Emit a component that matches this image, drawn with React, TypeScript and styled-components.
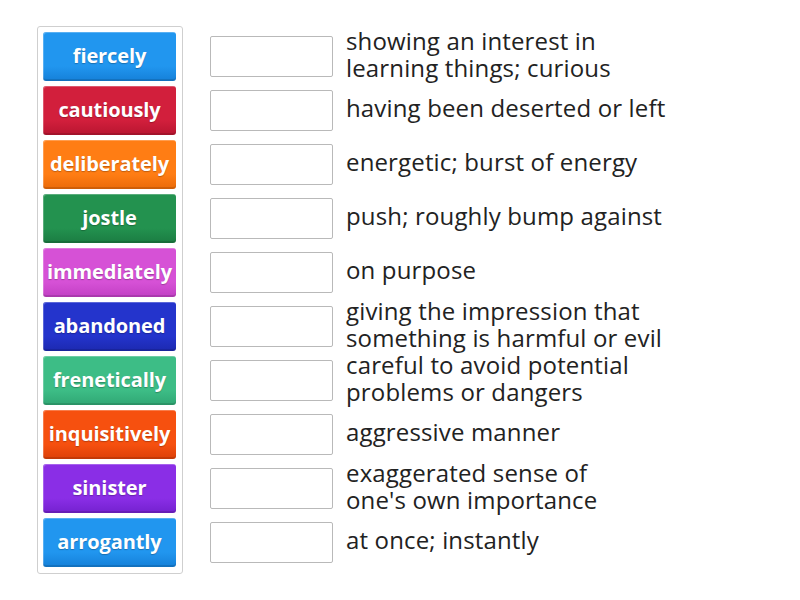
import React from "react";
import styled, { createGlobalStyle } from "styled-components";

const Global = createGlobalStyle`
  html, body { margin: 0; padding: 0; background: #fff; }
  body { font-family: "Open Sans", "Liberation Sans", sans-serif; }
`;

const Page = styled.div`
  display: flex;
  align-items: flex-start;
  gap: 27px;
  padding: 26px 0 0 37px;
`;

const Card = styled.div`
  display: flex;
  flex-direction: column;
  gap: 5px;
  padding: 5px 6px 6px 5px;
  border: 1px solid #cfcfcf;
  border-radius: 3px;
  background: #fff;
`;

const Tile = styled.div<{ $c: string; $d: string }>`
  width: 133px;
  height: 49px;
  box-sizing: border-box;
  padding-bottom: 2px;
  display: flex;
  align-items: center;
  justify-content: center;
  border-radius: 3px;
  background: linear-gradient(to bottom, ${(p) => p.$c} 0%, ${(p) => p.$c} 70%, ${(p) => p.$d} 100%);
  box-shadow: inset 1px 1px 0 rgba(255, 255, 255, 0.25), inset 0 -2px 0 rgba(0, 0, 0, 0.12);
  color: #fff;
  font-weight: 700;
  font-size: 20px;
  letter-spacing: -0.1px;
  text-shadow: 0 1px 1px rgba(0, 0, 0, 0.25);
  white-space: nowrap;
`;

const Rows = styled.div`
  display: flex;
  flex-direction: column;
  gap: 5px;
  padding-top: 6px;
`;

const Row = styled.div`
  height: 49px;
  display: flex;
  align-items: center;
  gap: 13px;
`;

const Box = styled.div`
  width: 123px;
  height: 41px;
  box-sizing: border-box;
  border: 1px solid #b9b9b9;
  border-radius: 2px;
  background: #fff;
  flex-shrink: 0;
`;

const Def = styled.div`
  font-size: 24px;
  line-height: 27px;
  letter-spacing: 0.15px;
  padding-bottom: 6px;
  color: #222;
  white-space: pre-line;
`;

const tiles: [string, string, string][] = [
  ["fiercely", "#2196ef", "#1580d8"],
  ["cautiously", "#d21f3c", "#b81530"],
  ["deliberately", "#ff7d14", "#ea6a08"],
  ["jostle", "#23924f", "#1b7c42"],
  ["immediately", "#d651d6", "#c13fc4"],
  ["abandoned", "#2434cc", "#1c29b0"],
  ["frenetically", "#3dbd86", "#30a774"],
  ["inquisitively", "#f6500f", "#dc4008"],
  ["sinister", "#8a2ee6", "#7421cf"],
  ["arrogantly", "#2196ef", "#1580d8"],
];

const defs = [
  "showing an interest in\nlearning things; curious",
  "having been deserted or left",
  "energetic; burst of energy",
  "push; roughly bump against",
  "on purpose",
  "giving the impression that\nsomething is harmful or evil",
  "careful to avoid potential\nproblems or dangers",
  "aggressive manner",
  "exaggerated sense of\none's own importance",
  "at once; instantly",
];

export default function App() {
  return (
    <>
      <Global />
      <Page>
        <Card>
          {tiles.map(([t, c, d]) => (
            <Tile key={t} $c={c} $d={d}>
              {t}
            </Tile>
          ))}
        </Card>
        <Rows>
          {defs.map((d) => (
            <Row key={d}>
              <Box />
              <Def>{d}</Def>
            </Row>
          ))}
        </Rows>
      </Page>
    </>
  );
}
